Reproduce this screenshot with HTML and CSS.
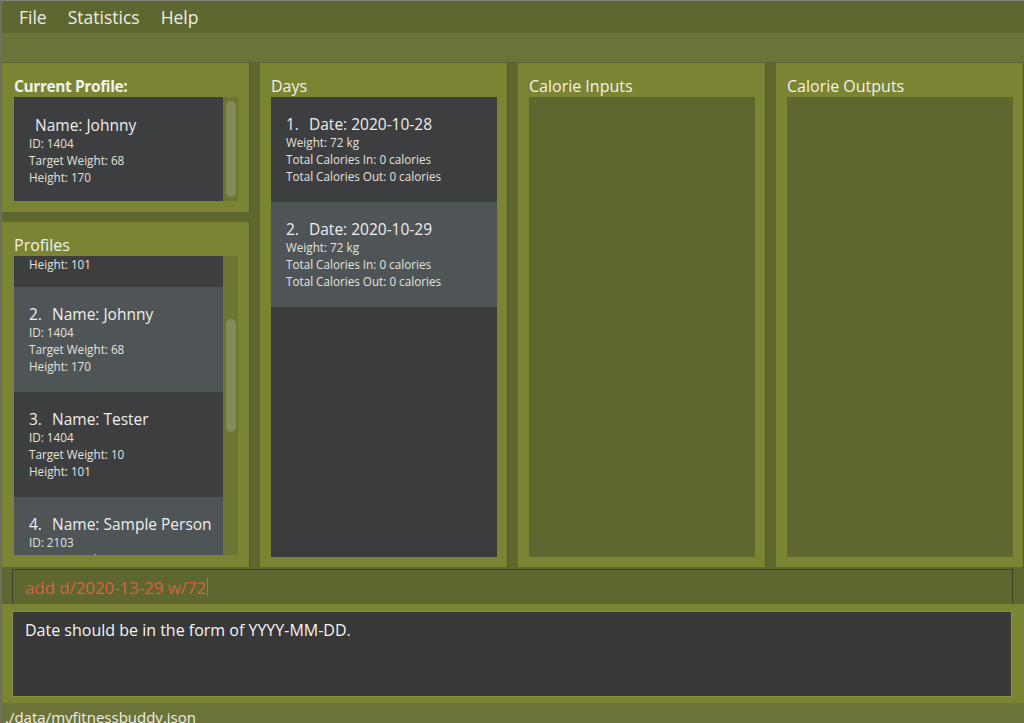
FILE: index.html
```html
<!DOCTYPE html>
<html>
<head>
<meta charset="utf-8">
<title>MyFitnessBuddy</title>
<link rel="stylesheet" href="styles.css">
</head>
<body>
<div class="window">
  <div class="menubar">
    <span class="menu-item">File</span>
    <span class="menu-item">Statistics</span>
    <span class="menu-item">Help</span>
  </div>
  <div class="toolbar"></div>
  <div class="panels">
    <div class="column">
      <section class="panel panel-left panel-current">
        <h2 class="panel-title bold">Current Profile:</h2>
        <div class="list">
          <div class="list-content">
            <div class="cell dark current-cell">
              <div class="cell-title"><span class="cell-name">Name: Johnny</span></div>
              <div class="cell-line">ID: 1404</div>
              <div class="cell-line">Target Weight: 68</div>
              <div class="cell-line">Height: 170</div>
            </div>
          </div>
          <div class="scrollbar"><div class="thumb thumb-current"></div></div>
        </div>
      </section>
      <section class="panel panel-left panel-profiles">
        <h2 class="panel-title">Profiles</h2>
        <div class="list">
          <div class="list-content">
            <div class="cell dark cell-partial">
              <div class="cell-line partial-line">Height: 101</div>
            </div>
            <div class="cell light">
              <div class="cell-title"><span class="cell-num">2.</span><span class="cell-name">Name: Johnny</span></div>
              <div class="cell-line">ID: 1404</div>
              <div class="cell-line">Target Weight: 68</div>
              <div class="cell-line">Height: 170</div>
            </div>
            <div class="cell dark">
              <div class="cell-title"><span class="cell-num">3.</span><span class="cell-name">Name: Tester</span></div>
              <div class="cell-line">ID: 1404</div>
              <div class="cell-line">Target Weight: 10</div>
              <div class="cell-line">Height: 101</div>
            </div>
            <div class="cell light">
              <div class="cell-title"><span class="cell-num">4.</span><span class="cell-name">Name: Sample Person</span></div>
              <div class="cell-line">ID: 2103</div>
              <div class="cell-line">Target Weight: 60</div>
            </div>
          </div>
          <div class="scrollbar"><div class="thumb thumb-profiles"></div></div>
        </div>
      </section>
    </div>
    <section class="panel panel-full">
      <h2 class="panel-title">Days</h2>
      <div class="list list-days">
        <div class="list-content">
          <div class="cell dark">
            <div class="cell-title"><span class="cell-num">1.</span><span class="cell-name">Date: 2020-10-28</span></div>
            <div class="cell-line">Weight: 72 kg</div>
            <div class="cell-line">Total Calories In: 0 calories</div>
            <div class="cell-line">Total Calories Out: 0 calories</div>
          </div>
          <div class="cell light">
            <div class="cell-title"><span class="cell-num">2.</span><span class="cell-name">Date: 2020-10-29</span></div>
            <div class="cell-line">Weight: 72 kg</div>
            <div class="cell-line">Total Calories In: 0 calories</div>
            <div class="cell-line">Total Calories Out: 0 calories</div>
          </div>
        </div>
      </div>
    </section>
    <section class="panel panel-full">
      <h2 class="panel-title">Calorie Inputs</h2>
      <div class="list list-empty"></div>
    </section>
    <section class="panel panel-full">
      <h2 class="panel-title">Calorie Outputs</h2>
      <div class="list list-empty"></div>
    </section>
  </div>
  <div class="command-row">
    <div class="command-box"><span class="command-text">add d/2020-13-29 w/72</span><span class="caret"></span></div>
  </div>
  <div class="result-row">
    <div class="result-box">Date should be in the form of YYYY-MM-DD.</div>
  </div>
  <div class="statusbar">./data/myfitnessbuddy.json</div>
</div>
</body>
</html>
```

FILE: styles.css
```css
* { box-sizing: border-box; }
html, body {
  margin: 0;
  padding: 0;
  width: 1024px;
  height: 723px;
  overflow: hidden;
  background: #5f6730;
  font-family: "Open Sans", "Noto Sans", sans-serif;
}
.window {
  width: 1024px;
  height: 723px;
  display: flex;
  flex-direction: column;
  border-left: 2px solid #6e6e64;
  border-top: 1px solid #85857a;
  overflow: hidden;
}
.menubar {
  height: 32px;
  flex: none;
  background: #5f6730;
  display: flex;
  align-items: center;
  gap: 21px;
  padding-left: 17px;
}
.menu-item {
  color: #ecede4;
  font-size: 17.5px;
  line-height: 32px;
}
.toolbar {
  height: 30px;
  flex: none;
  background: #6b7339;
  border-bottom: 1px solid #5a6130;
}
.panels {
  flex: none;
  height: 504px;
  display: grid;
  grid-template-columns: repeat(4, 248px);
  grid-template-rows: 504px;
  gap: 10px;
  background: #5f6730;
}
.column {
  display: flex;
  flex-direction: column;
  gap: 10px;
  min-height: 0;
  overflow: hidden;
}
.panel {
  background: #7a8433;
  border-right: 1px solid #535a2d;
  display: flex;
  flex-direction: column;
  padding: 0 10px 10px 11px;
  min-height: 0;
  overflow: hidden;
}
.panel-left { padding-left: 12px; padding-right: 11px; }
.panel-current { height: 149px; flex: none; padding-bottom: 11px; }
.panel-profiles { flex: 1; padding-bottom: 12px; }
.panel-full { padding-bottom: 10px; }
.panel-title {
  margin: 0;
  height: 34px;
  flex: none;
  font-size: 16px;
  font-weight: normal;
  color: #f1f2ea;
  line-height: 20px;
  padding-top: 13px;
  white-space: nowrap;
}
.panel-title.bold {
  font-weight: bold;
  font-size: 15.5px;
  letter-spacing: -0.4px;
}
.list {
  flex: 1;
  display: flex;
  min-height: 0;
  overflow: hidden;
}
.list-content {
  flex: 1;
  background: #3a3b3d;
  overflow: hidden;
  min-width: 0;
}
.list-empty { background: #5f6730; }
.scrollbar {
  width: 15px;
  flex: none;
  background: #6c7536;
  padding: 4px 2px 4px 3px;
  display: flex;
  flex-direction: column;
}
.thumb {
  background: #838c57;
  border-radius: 5px;
}
.thumb-current { flex: 1; }
.thumb-profiles { height: 113px; margin-top: 59px; }
.cell {
  height: 105px;
  padding: 17px 0 0 15px;
  color: #e2e3df;
  white-space: nowrap;
}
.cell.dark { background: #3d3e40; }
.cell.light { background: #4f5557; }
.cell-partial { height: 31px; padding-top: 0; }
.partial-line { line-height: 12px; }
.current-cell { padding-top: 18px; }
.current-cell .cell-name { padding-left: 6px; }
.cell-title {
  font-size: 15.5px;
  line-height: 20px;
  color: #eeeeec;
}
.cell-num {
  display: inline-block;
  width: 23px;
}
.cell-line {
  font-size: 11.7px;
  line-height: 17px;
}
.command-row {
  height: 37px;
  flex: none;
  background: #5f6730;
  padding-top: 2px;
  padding-left: 10px;
}
.command-box {
  width: 1001px;
  height: 35px;
  border-top: 1px solid #3d402c;
  border-left: 1px solid #3d402c;
  border-right: 1px solid #3d402c;
  background: #5f6730;
  padding-left: 12px;
  display: flex;
  align-items: center;
}
.command-text {
  color: #d9623f;
  font-size: 17px;
  letter-spacing: -0.1px;
}
.caret {
  width: 1px;
  height: 18px;
  background: #d9623f;
  margin-left: 1px;
}
.result-row {
  height: 99px;
  flex: none;
  background: #7a8433;
  padding: 7px 0 0 10px;
}
.result-box {
  width: 1000px;
  height: 86px;
  background: #383838;
  border: 1px solid #87913f;
  color: #f5f5f5;
  font-size: 16px;
  line-height: 20px;
  padding: 8px 0 0 12px;
}
.statusbar {
  height: 20px;
  flex: none;
  background: #6b7339;
  color: #eeeee6;
  font-size: 15px;
  line-height: 20px;
  padding-left: 3px;
  padding-top: 4px;
  white-space: nowrap;
}
```
